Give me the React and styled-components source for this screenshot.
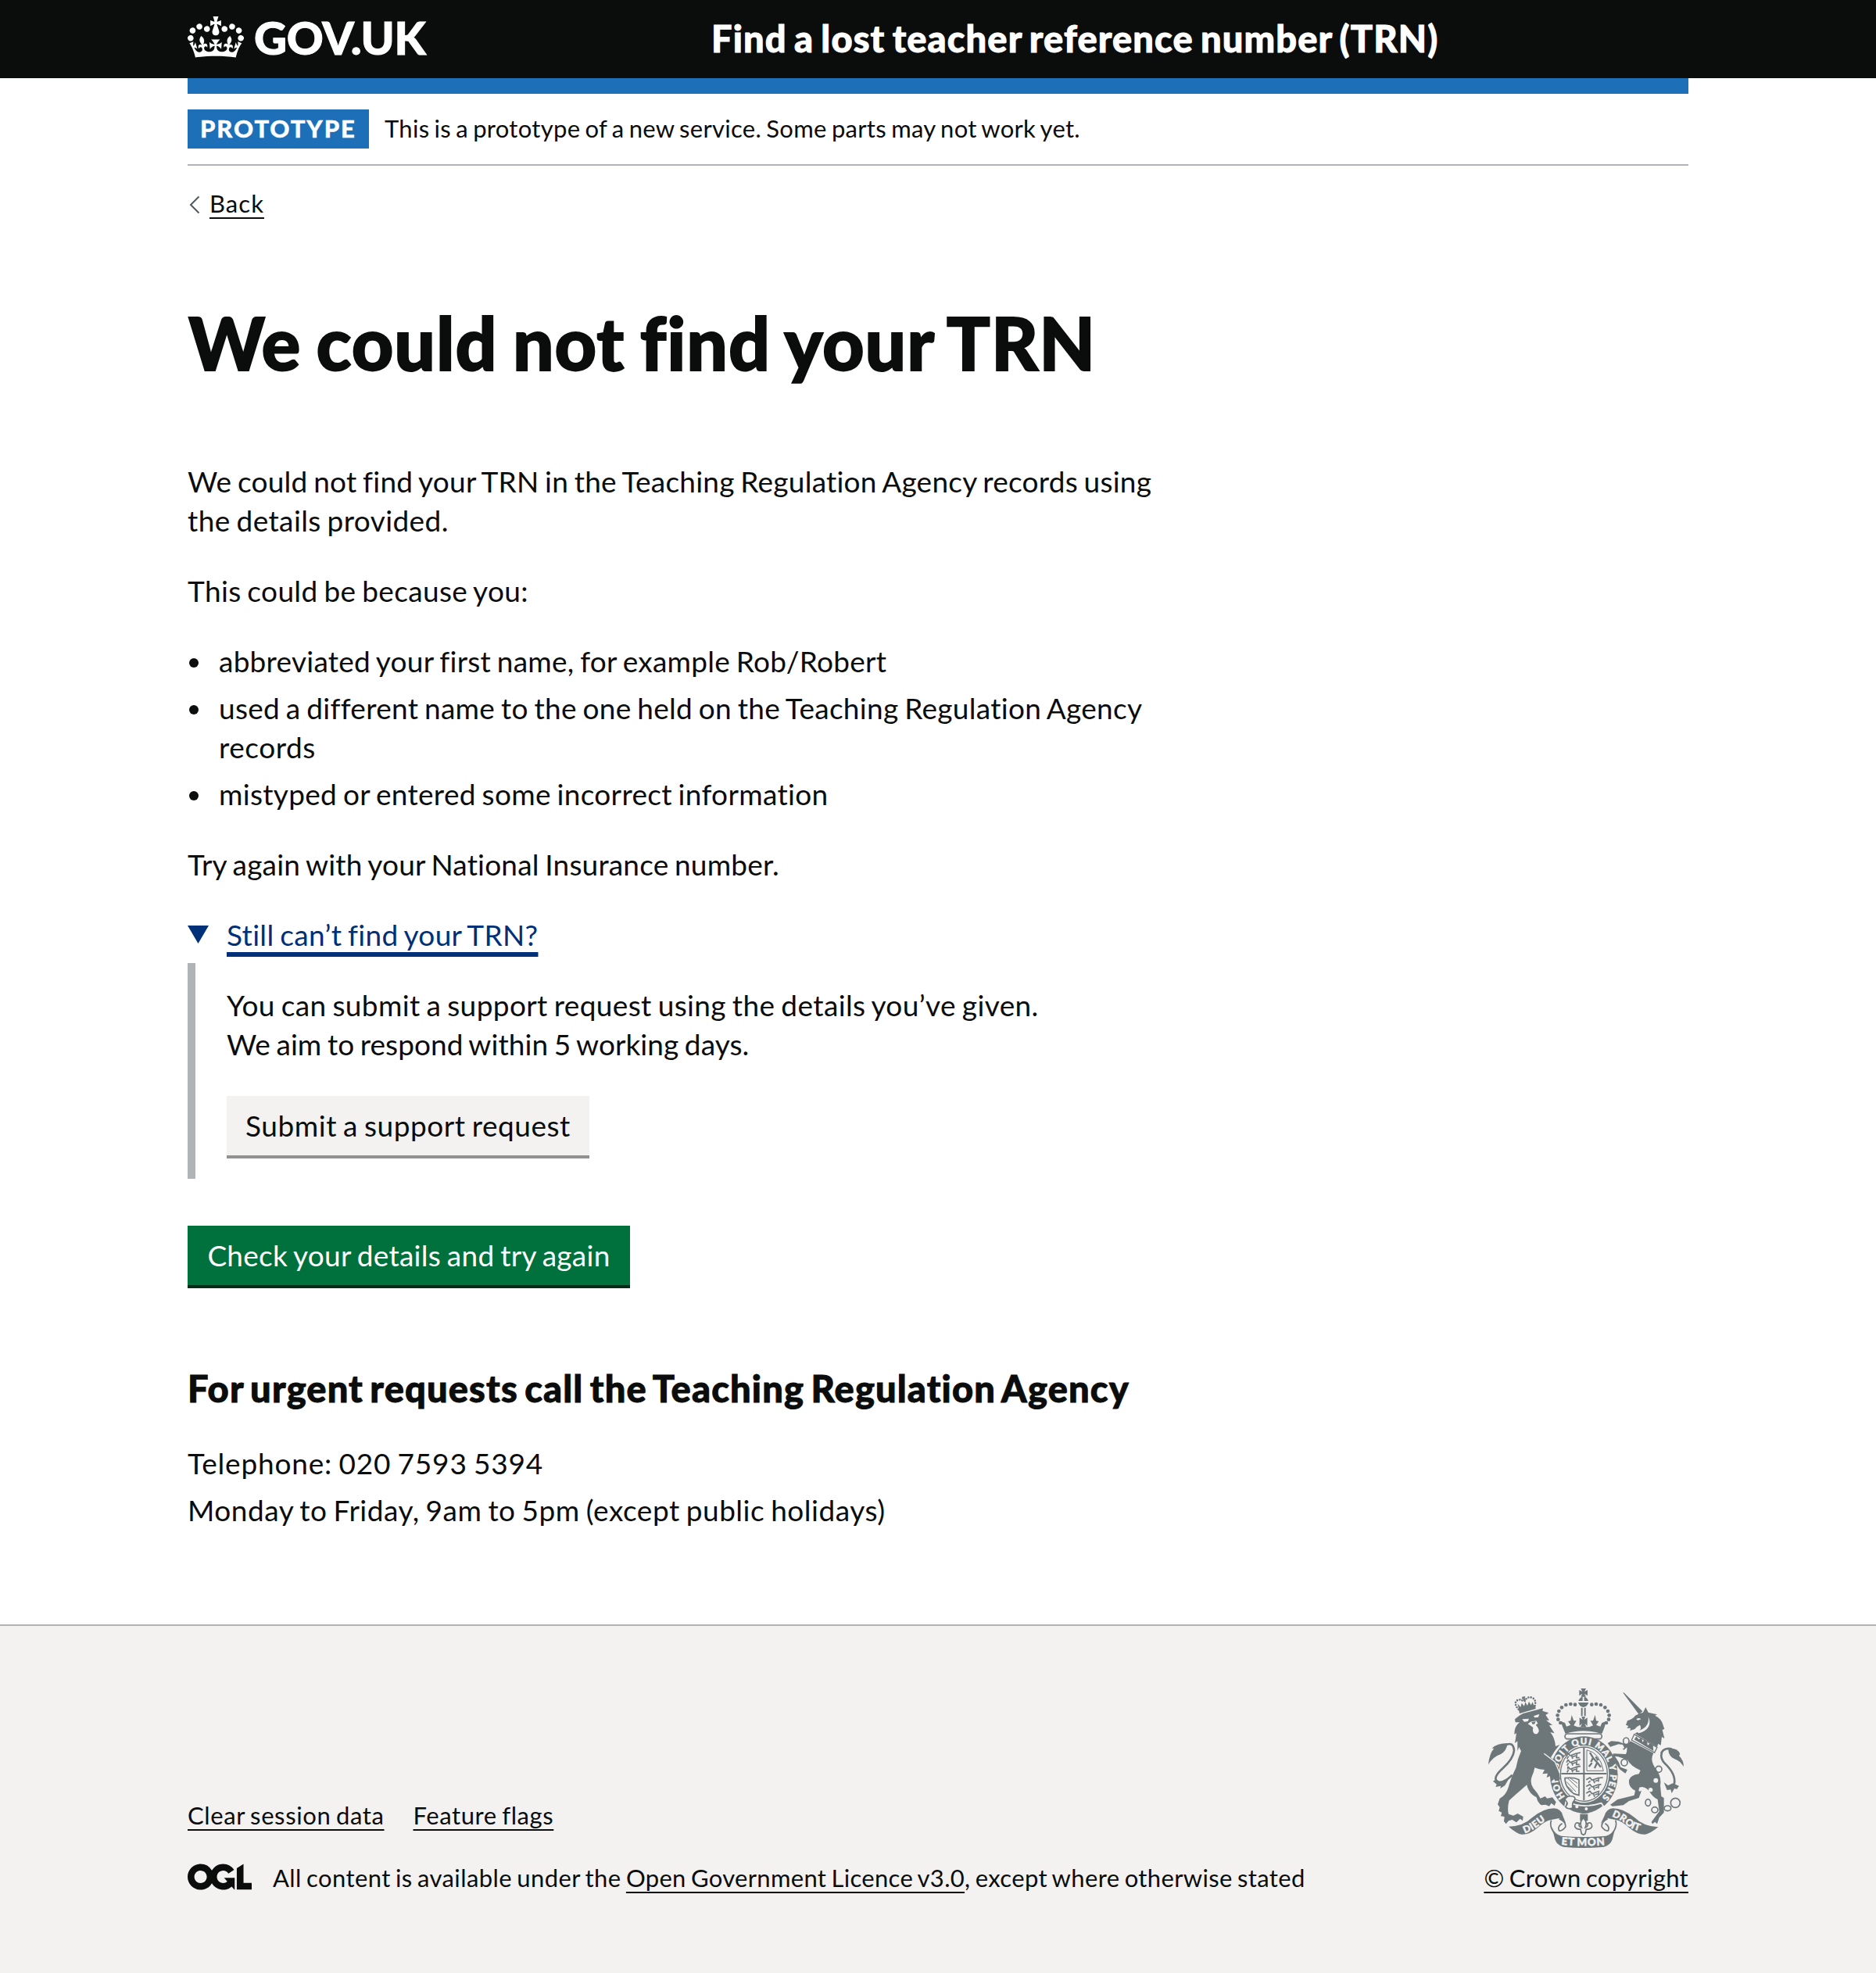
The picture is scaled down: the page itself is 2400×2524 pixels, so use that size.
import React from 'react';
import styled, { createGlobalStyle, css } from 'styled-components';

const ink = '#0b0c0c';
const crestGrey = '#6d777a';
const panel = '#f3f2f1';
const rule = '#b1b4b6';

const GlobalStyle = createGlobalStyle`
  *, *::before, *::after { box-sizing: border-box; }
  body {
    margin: 0;
    background: #fff;
    color: ${ink};
    font-family: Lato, 'Open Sans', 'Liberation Sans', sans-serif;
    font-size: 37px;
    line-height: 50px;
    word-spacing: -2px;
  }
`;

const Page = styled.div`
  min-height: 2524px;
  display: flex;
  flex-direction: column;
`;

const Container = styled.div`
  width: 1920px;
  margin: 0 auto;
`;

const Header = styled.header`
  height: 100px;
  background: ${ink};
  color: #fff;
`;

const HeaderRow = styled(Container)`
  display: flex;
  align-items: center;
  height: 100px;
`;

const HomeLink = styled.div`
  display: flex;
  align-items: center;
  width: 670px;
  font-size: 58px;
  font-weight: 900;
  line-height: 94px;
  letter-spacing: -0.2px;
  -webkit-text-stroke: 1px currentColor;
`;

const Wordmark = styled.span`
  padding-bottom: 5px;
`;

const CrownIcon = styled.svg`
  display: block;
  width: 72px;
  height: 53px;
  margin: 0 13px 5px 0;
`;

const ServiceName = styled.div`
  font-size: 47px;
  font-weight: 900;
  line-height: 60px;
  letter-spacing: 1.1px;
  word-spacing: -3px;
  -webkit-text-stroke: 0.9px currentColor;
  white-space: nowrap;
  padding-bottom: 3px;
`;

const AccentBar = styled(Container)`
  height: 20px;
  background: #1d70b8;
`;

const PhaseBanner = styled(Container)`
  display: flex;
  align-items: center;
  gap: 20px;
  height: 92px;
  border-bottom: 2px solid ${rule};
`;

const Tag = styled.strong`
  width: 232px;
  height: 50px;
  padding-left: 16px;
  background: #1d70b8;
  color: #fff;
  font-size: 31px;
  font-weight: 900;
  line-height: 48px;
  letter-spacing: 1.9px;
  -webkit-text-stroke: 0.4px currentColor;
  white-space: nowrap;
`;

const Text = styled.span`
  display: ${(p) => (p.$block ? 'block' : 'inline')};
  letter-spacing: ${(p) => p.$ls || 0}px;
  white-space: nowrap;
`;

const small = css`
  font-size: 31px;
  line-height: 40px;
`;

const BannerText = styled.div`
  ${small}
  padding-bottom: 3px;
`;

const linkLine = css`
  color: ${ink};
  text-decoration: underline;
  text-decoration-thickness: 2px;
  text-underline-offset: 6px;
  text-decoration-skip-ink: none;
`;

const SmallLink = styled.a`
  ${linkLine}
  letter-spacing: ${(p) => p.$ls || 0}px;
  white-space: nowrap;
`;

const BackRow = styled.div`
  ${small}
  display: flex;
  align-items: center;
  margin-top: 28px;
`;

const BackArrow = styled.svg`
  width: 28px;
  height: 24px;
  margin-top: 3px;
`;

const Title = styled.h1`
  margin: 108px 0 103px;
  padding-left: 1px;
  font-size: 93px;
  font-weight: 900;
  line-height: 100px;
  letter-spacing: 0.9px;
  word-spacing: -3.5px;
  -webkit-text-stroke: 1.8px currentColor;
`;

const Paragraph = styled.p`
  margin: 0 0 ${(p) => p.$gap || 40}px;
`;

const BulletList = styled.ul`
  display: flex;
  flex-direction: column;
  gap: 10px;
  margin: 0 0 40px;
  padding: 0;
  list-style: none;
`;

const Bullet = styled.li`
  display: flex;
  gap: 26px;

  &::before {
    content: '';
    flex: none;
    width: 12px;
    height: 12px;
    margin: 21px 0 0 2px;
    border-radius: 50%;
    background: ${ink};
  }
`;

const Summary = styled.div`
  display: flex;
  gap: 23px;
  height: 61px;
  color: #003078;
`;

const Triangle = styled.span`
  width: 27px;
  height: 23px;
  margin-top: 13px;
  background: #003078;
  clip-path: polygon(0 0, 100% 0, 50% 100%);
`;

const SummaryText = styled.span`
  letter-spacing: 0.33px;
  text-decoration: underline;
  text-decoration-thickness: 6px;
  text-underline-offset: 8px;
  text-decoration-skip-ink: none;
`;

const Inset = styled.div`
  height: 276px;
  margin-bottom: 60px;
  padding: 29px 0 0 40px;
  border-left: 10px solid ${rule};
`;

const Button = styled.button`
  display: block;
  height: 80px;
  margin: 0;
  padding: 0 24px;
  border: 0;
  border-bottom: 4px solid ${(p) => (p.$secondary ? '#929191' : '#002d18')};
  background: ${(p) => (p.$secondary ? panel : '#00703c')};
  color: ${(p) => (p.$secondary ? ink : '#fff')};
  width: ${(p) => p.$width}px;
  font: inherit;
  letter-spacing: ${(p) => p.$ls}px;
  word-spacing: inherit;
  white-space: nowrap;
`;

const Subheading = styled.h2`
  margin: 98px 0 41px;
  font-size: 47px;
  font-weight: 900;
  line-height: 60px;
  letter-spacing: 1.15px;
  word-spacing: -4px;
  -webkit-text-stroke: 0.9px currentColor;
`;

const Contact = styled.div`
  display: flex;
  flex-direction: column;
  gap: 10px;
`;

const Footer = styled.footer`
  ${small}
  height: 446px;
  margin-top: 121px;
  border-top: 2px solid ${rule};
  background: ${panel};
`;

const FooterRow = styled(Container)`
  display: flex;
  justify-content: space-between;
  padding-top: 80px;
`;

const FooterMeta = styled.div`
  display: flex;
  flex-direction: column;
  justify-content: flex-end;
  gap: 40px;
`;

const FooterLinks = styled.div`
  display: flex;
  gap: 37px;
`;

const Licence = styled.div`
  display: flex;
  gap: 27px;
`;

const OglLogo = styled.svg`
  width: 82px;
  height: 34px;
  margin-top: 2px;
`;

const Copyright = styled.div`
  display: flex;
  flex-direction: column;
  align-items: flex-end;
  gap: 18px;
`;

const CrestArt = styled.svg`
  display: block;
  width: 250px;
  height: 204px;
  margin-right: 6px;
`;

const Crown = () => (
  <CrownIcon viewBox="0 0 132 97" fill="#fff">
    <path fillRule="evenodd" d="M25 30.2c3.5 1.5 7.7-.2 9.1-3.7 1.5-3.6-.2-7.8-3.9-9.2-3.6-1.4-7.6.3-9.1 3.9-1.4 3.5.3 7.5 3.9 9zM9 39.5c3.6 1.5 7.8-.2 9.2-3.7 1.5-3.6-.2-7.8-3.9-9.1-3.6-1.5-7.6.2-9.1 3.8-1.4 3.5.3 7.5 3.8 9zM4.4 57.2c3.5 1.5 7.7-.2 9.1-3.8 1.5-3.6-.2-7.7-3.9-9.1-3.5-1.5-7.6.3-9.1 3.8-1.4 3.5.3 7.6 3.9 9.1zm38.3-21.4c3.5 1.5 7.7-.2 9.1-3.8 1.5-3.6-.2-7.7-3.9-9.1-3.6-1.5-7.6.3-9.1 3.8-1.3 3.6.4 7.7 3.9 9.1zm64.4-5.6c-3.6 1.5-7.8-.2-9.1-3.7-1.5-3.6.2-7.8 3.8-9.2 3.6-1.4 7.7.3 9.2 3.9 1.3 3.5-.4 7.5-3.9 9zm15.9 9.3c-3.6 1.5-7.7-.2-9.1-3.7-1.5-3.6.2-7.8 3.7-9.1 3.6-1.5 7.7.2 9.2 3.8 1.5 3.5-.3 7.5-3.8 9zm4.7 17.7c-3.6 1.5-7.8-.2-9.2-3.8-1.5-3.6.2-7.7 3.9-9.1 3.6-1.5 7.7.3 9.2 3.8 1.3 3.5-.4 7.6-3.9 9.1zM89.3 35.8c-3.6 1.5-7.8-.2-9.2-3.8-1.4-3.6.2-7.7 3.9-9.1 3.6-1.5 7.7.3 9.2 3.8 1.4 3.6-.3 7.7-3.9 9.1zM69.7 17.7l8.9 4.7V9.3l-8.9 2.8c-.2-.3-.5-.6-.9-.9L72.4 0H59.6l3.5 11.2c-.3.3-.6.5-.9.9l-8.8-2.8v13.1l8.8-4.7c.3.3.6.7.9.9l-5 15.4v.1c-.2.8-.4 1.6-.4 2.4 0 4.1 3.1 7.5 7 8.1h.2c.3 0 .7.1 1 .1.4 0 .7 0 1-.1h.2c4-.6 7.1-4.1 7.1-8.1 0-.8-.1-1.7-.4-2.4V34l-5.1-15.4c.4-.2.7-.6 1-.9zM66 92.8c16.9 0 32.8 1.1 47.1 3.2 4-16.9 8.9-26.7 14-33.5l-9.6-3.4c1 4.9 1.1 7.2 0 10.2-1.5-1.4-3-4.3-4.2-8.7L108.6 76c2.8-2 5-3.2 7.5-3.3-4.4 9.4-10 11.9-13.6 11.2-4.3-.8-6.3-4.6-5.6-7.9 1-4.7 5.7-5.9 8-.5 4.3-8.7-3-11.4-7.6-8.8 7.1-7.2 7.9-13.5 2.1-21.1-8 6.1-8.1 12.3-4.5 20.8-4.7-5.4-12.1-2.5-9.5 6.2 3.4-5.2 7.9-2 7.2 3.1-.6 4.3-6.4 7.8-13.5 7.2-10.3-.9-10.9-8-11.2-13.8 2.5-.5 7.1 1.8 11 7.3L80.2 60c-4.1 4.4-8 5.3-12.3 5.4 1.4-4.4 8-11.6 8-11.6H55.5s6.4 7.2 7.9 11.6c-4.2-.1-8-1-12.3-5.4l1.4 16.4c3.9-5.5 8.5-7.7 10.9-7.3-.3 5.8-.9 12.8-11.1 13.8-7.2.6-12.9-2.9-13.5-7.2-.7-5 3.8-8.3 7.1-3.1 2.7-8.7-4.6-11.6-9.4-6.2 3.7-8.5 3.6-14.7-4.6-20.8-5.8 7.6-5 13.9 2.2 21.1-4.7-2.6-11.9.1-7.7 8.8 2.3-5.5 7.1-4.2 8.1.5.7 3.3-1.3 7.1-5.7 7.9-3.5.7-9-1.8-13.5-11.2 2.5.1 4.7 1.3 7.5 3.3l-4.7-15.4c-1.2 4.4-2.7 7.2-4.3 8.7-1.1-3-.9-5.3 0-10.2l-9.5 3.4c5 6.9 9.9 16.7 14 33.5 14.8-2.1 30.8-3.2 47.7-3.2z" />
  </CrownIcon>
);

const crownBeads = [
  [405, 122], [388, 120], [370, 123], [354, 133], [343, 147], [338, 163], [340, 179], [349, 192],
];

const Crest = () => (
  <CrestArt viewBox="72 60 750 612" fill={crestGrey}>
    {/* lion */}
    <path d="M174 178L190 165L205 156L282 136L280 146L304 154L292 162L306 182L294 182L318 200L306 202L326 232L310 228Q328 250 330 282L346 276Q325 300 312 325Q340 350 346 385L348 408L338 404L334 414L326 402L316 412L310 396L296 402L300 386L280 388L288 372L268 370L250 364Q247 382 240 396Q230 420 244 442Q262 462 272 482L290 474L298 482L318 478L332 496L326 510L314 500L306 512L292 506L276 508Q262 500 257 478Q226 462 220 430Q182 462 152 490Q144 520 150 542L168 548L185 540L206 552L204 568L194 560L180 574L164 564L150 568L140 580L132 570L134 552L120 550L124 536L112 530L116 516L108 505L116 482Q142 470 152 430Q160 400 178 365Q184 330 198 300L190 285L184 300L184 262L174 270L180 232L172 236Q172 205 192 190L176 190Z" />
    <path d="M202 178L228 176L224 186L210 188ZM246 166L268 158L264 170L250 172Z" fill={panel} />
    <path d="M224 196L234 188L256 184L262 194L254 200Q268 214 266 226Q260 238 250 234Q240 228 244 210L236 204Z" fill={panel} />
    <path d="M238 190L254 186L250 196L242 198Z" />
    <path d="M72 352Q76 310 94 290L86 290Q104 270 146 270Q142 300 120 312Q90 322 72 352Z" />
    <path d="M134 280Q168 260 171 298Q168 330 128 366Q90 400 104 416Q124 430 164 392" fill="none" stroke={crestGrey} strokeWidth="8" />
    <path d="M90 416L104 408L120 424L150 408L136 432L118 444L120 434L100 438L104 428Z" />
    {/* lion's crown */}
    <path d="M188 140L252 124L254 138L192 156ZM184 118L196 132L200 116L210 128L214 112L222 126L228 110L236 124L242 112L248 128L190 142ZM202 92L214 90L212 98L216 106L206 108L206 100L200 100Z" />
    <g fill="none" stroke={crestGrey} strokeWidth="8" strokeLinecap="round" strokeDasharray="0 10">
      <path d="M188 140Q168 118 182 106Q198 98 208 112" />
      <path d="M212 108Q222 88 242 96Q258 106 250 128" />
    </g>

    {/* St Edward's crown */}
    {crownBeads.map(([x, y]) => (
      <React.Fragment key={x}>
        <circle cx={x} cy={y} r="7" />
        <circle cx={874 - x} cy={y} r="7" />
      </React.Fragment>
    ))}
    <path d="M427 60H447L441 72L453 66V88L441 80L447 92H427L433 80L421 88V66L433 72Z" />
    <path d="M418 108Q422 94 434 92V108ZM440 92Q452 94 456 108H440ZM417 114H457Q452 130 437 132Q422 130 417 114Z" />
    <path d="M428 134H434V166H428ZM440 134H446V166H440Z" />
    <path d="M422 172L434 180L430 168H444L440 180L452 172V204L442 194L448 208H426L432 194L422 204Z" />
    <path d="M350 186Q356 206 368 234Q437 212 508 234Q520 206 524 186L508 192L502 206L486 200L496 186L486 184L482 162L474 184L464 184L474 202L460 208H414L400 202L410 184L400 184L392 162L388 184L378 186L388 200L372 206L366 192Z" />
    <rect x="366" y="234" width="142" height="20" rx="10" fill={panel} stroke={crestGrey} strokeWidth="5" />

    {/* garter */}
    <ellipse cx="439" cy="392" rx="130" ry="148" />
    <ellipse cx="439" cy="389" rx="96" ry="110" fill={panel} />
    <ellipse cx="439" cy="389" rx="90" ry="104" fill="none" stroke={crestGrey} strokeWidth="4" />
    <path d="M436 285H442V490H436ZM352 384H526V390H352Z" />
    <defs>
      <path id="garterLine" d="M371 480A101 118 0 1 1 503 484" />
      <path id="leftScroll" d="M212 616Q250 602 276 578Q296 562 330 550" />
      <path id="rightScroll" d="M546 551Q580 562 608 588Q640 610 690 612" />
      <path id="midScroll" d="M352 659Q437 669 540 659" />
    </defs>
    <g fill={panel} stroke={panel} strokeWidth="1.4" fontFamily="Lato, sans-serif" fontWeight="900" wordSpacing="0">
      <text fontSize="34" letterSpacing="3.4"><textPath href="#garterLine" startOffset="6">HONI SOIT QUI MAL Y PENSE</textPath></text>
    </g>
    <g fill="none" stroke={crestGrey} strokeWidth="5" strokeLinejoin="round">
      {[0, 26, 52].map((dy) => (
        <path key={dy} d={`M${368 + dy / 6} ${318 + dy}L378 ${308 + dy}L386 ${318 + dy}L408 ${310 + dy}L426 ${306 + dy}M380 ${320 + dy}L374 ${330 + dy}M392 ${318 + dy}L396 ${330 + dy}M412 ${312 + dy}L410 ${326 + dy}L422 ${326 + dy}M396 ${322 + dy}L408 ${318 + dy}`} />
      ))}
      {[0, 26, 52].map((dy) => (
        <path key={dy} d={`M448 ${410 + dy}L462 ${402 + dy}L470 ${412 + dy}L492 ${404 + dy}L${512 - dy / 4} ${402 + dy}M464 ${414 + dy}L456 ${422 + dy}M476 ${412 + dy}L480 ${424 + dy}M496 ${406 + dy}L494 ${418 + dy}M482 ${416 + dy}L492 ${412 + dy}`} />
      ))}
      <path d="M450 296V376H514" strokeWidth="3" />
      <path d="M450 296Q500 306 514 376" strokeWidth="3" />
      <path d="M462 306L474 326L466 342M474 326L490 344L480 366M490 344L504 362M470 346L458 360M484 322L494 336" strokeWidth="7" />
      <path d="M366 404Q366 440 400 464L420 470V410Q400 400 366 404Z" />
      <path d="M376 404L414 440M386 404L414 424M372 418L408 456M374 434L396 454" strokeWidth="3" />
    </g>
    {/* buckle and strap */}
    <path d="M370 492Q430 524 506 500L514 512Q470 546 430 542Q390 536 366 514Z" stroke={panel} strokeWidth="5" />
    <path d="M366 488Q372 470 396 474Q410 478 402 490Q392 500 396 518Q376 526 368 514Q384 500 366 488Z" fill={panel} stroke={crestGrey} strokeWidth="5" />
    <circle cx="412" cy="514" r="6" fill={panel} />
    <circle cx="448" cy="522" r="6" fill={panel} />
    <path d="M424 542H454V568H424Z" />
    <path d="M437 556Q454 574 444 594Q458 590 452 578Q470 570 470 590Q464 602 448 600L444 618L437 622L430 618L426 600Q410 602 404 590Q404 570 422 578Q416 590 430 594Q420 574 437 556Z" fill={panel} stroke={crestGrey} strokeWidth="5" />
    {/* lion's paw over the garter */}
    <path d="M284 312L318 330L340 358L348 410L336 406L330 416L322 404L312 410L308 392Z" />
    <path d="M286 310L328 342L346 384" fill="none" stroke={panel} strokeWidth="4" />

    {/* unicorn */}
    <path d="M588 75L594 77L664 148L650 160Z" />
    <path d="M600 200L606 184Q628 176 636 164Q648 156 666 152L676 132L686 152L720 160L712 164Q736 176 742 198L748 216L740 218L748 252L738 246L734 278L724 272L720 284L646 240L634 232Q666 220 654 200Q640 206 634 216L616 222L618 212L604 212L610 204Z" />
    <path d="M640 178Q650 170 658 178L646 182Z" fill={panel} />
    <path d="M686 168Q694 210 640 226L650 232Q706 214 686 168Z" fill={panel} />
    <path d="M632 236L720 286L710 306L622 258Z" fill={panel} stroke={crestGrey} strokeWidth="4" />
    <path d="M632 256L640 244L650 256L660 248L664 266L672 256L680 262L684 278L694 270L704 276L706 300Z" />
    <path d="M618 262L706 308Q690 336 716 370Q738 400 732 432L736 474L746 480V536L728 556L720 580L712 572L702 580L698 572L728 532L722 486Q704 478 688 452Q668 432 652 440Q644 462 660 452L650 480L612 492L590 508L548 512L540 506L568 486L632 470L636 452Q610 440 612 412Q618 392 650 388L656 374Q620 360 606 334L570 322L558 320L572 342L580 362L606 372L598 386L576 370L560 346L546 322L552 310L600 312Q606 300 604 286L592 296L582 288L590 276L572 274L540 284L530 270L544 262L572 264L604 276Z" />
    <path d="M738 304Q730 330 752 350Q792 390 786 424L784 436" fill="none" stroke={crestGrey} strokeWidth="8" />
    <path d="M736 308Q746 286 776 292" fill="none" stroke={crestGrey} strokeWidth="8" />
    <path d="M762 290Q800 288 808 312L804 318Q822 336 822 360Q806 336 786 330Q764 322 762 290Z" />
    <path d="M746 420L762 432L780 424L804 434L796 446L786 444L776 462L772 448L758 450Z" />
    <g fill={panel}>
      <circle cx="715" cy="413" r="9" />
      <circle cx="695" cy="449" r="8" />
      <circle cx="586" cy="286" r="7" />
    </g>
    <g fill="none" stroke={crestGrey} strokeWidth="5">
      <ellipse cx="601" cy="262" rx="11" ry="13" />
      <ellipse cx="594" cy="344" rx="12" ry="13" />
      <circle cx="726" cy="370" r="12" />
      <ellipse cx="685" cy="498" rx="10" ry="13" />
      <ellipse cx="711" cy="526" rx="12" ry="11" />
      <ellipse cx="760" cy="520" rx="13" ry="10" />
      <circle cx="790" cy="499" r="18" />
    </g>

    {/* motto scroll */}
    <path d="M150 590Q205 590 240 556Q284 520 324 520Q352 522 358 548L370 578L344 558L314 564Q290 568 262 594Q230 622 200 620Q182 618 150 590Z" />
    <path d="M724 592Q668 590 634 556Q590 520 550 520Q526 522 518 548L504 578L530 558L560 564Q584 568 612 594Q644 622 674 620Q692 618 724 592Z" />
    <path d="M314 566Q304 590 330 622M344 560Q372 572 368 592Q356 608 344 606Q336 590 356 578M560 566Q570 590 544 622M530 560Q504 572 508 592Q520 608 532 606Q540 590 520 578" fill="none" stroke={crestGrey} strokeWidth="5" />
    <path d="M316 592Q328 622 352 626Q437 634 524 626Q546 622 560 592L548 640Q540 662 516 668Q437 676 360 668Q336 662 328 640Z" />
    <g fill={panel} stroke={panel} strokeWidth="1.4" fontFamily="Lato, sans-serif" fontWeight="900">
      <text fontSize="37" letterSpacing="2"><textPath href="#leftScroll">DIEU</textPath></text>
      <text fontSize="37" letterSpacing="1"><textPath href="#rightScroll">DROIT</textPath></text>
      <text fontSize="40" letterSpacing="2.5"><textPath href="#midScroll">ET MON</textPath></text>
    </g>
  </CrestArt>
);

export default function App() {
  return (
    <Page>
      <GlobalStyle />
      <Header>
        <HeaderRow>
          <HomeLink>
            <Crown />
            <Wordmark>GOV.UK</Wordmark>
          </HomeLink>
          <ServiceName>Find a lost teacher reference number (TRN)</ServiceName>
        </HeaderRow>
      </Header>
      <AccentBar />
      <PhaseBanner>
        <Tag>PROTOTYPE</Tag>
        <BannerText>
          <Text $ls={0.29}>This is a prototype of a new service. Some parts may not work yet.</Text>
        </BannerText>
      </PhaseBanner>

      <Container as="main">
        <BackRow>
          <BackArrow viewBox="0 0 28 24" fill="none" stroke="#505a5f" strokeWidth="2">
            <path d="M14.5 1.500L4 12l10.500 10.500" />
          </BackArrow>
          <SmallLink $ls={1.05}>Back</SmallLink>
        </BackRow>

        <Title>We could not find your TRN</Title>

        <Paragraph>
          <Text $block $ls={0.23}>We could not find your TRN in the Teaching Regulation Agency records using</Text>
          <Text $block $ls={0.4}>the details provided.</Text>
        </Paragraph>
        <Paragraph>
          <Text $ls={0.36}>This could be because you:</Text>
        </Paragraph>
        <BulletList>
          <Bullet>
            <Text $ls={0.25}>abbreviated your first name, for example Rob/Robert</Text>
          </Bullet>
          <Bullet>
            <div>
              <Text $block $ls={0.29}>used a different name to the one held on the Teaching Regulation Agency</Text>
              <Text $block $ls={0.55}>records</Text>
            </div>
          </Bullet>
          <Bullet>
            <Text $ls={0.31}>mistyped or entered some incorrect information</Text>
          </Bullet>
        </BulletList>
        <Paragraph>
          <Text $ls={0.18}>Try again with your National Insurance number.</Text>
        </Paragraph>

        <Summary>
          <Triangle />
          <SummaryText>Still can’t find your TRN?</SummaryText>
        </Summary>
        <Inset>
          <Paragraph $gap={41}>
            <Text $block $ls={0.39}>You can submit a support request using the details you’ve given.</Text>
            <Text $block $ls={0.07}>We aim to respond within 5 working days.</Text>
          </Paragraph>
          <Button $secondary $width={464} $ls={0.55}>Submit a support request</Button>
        </Inset>
        <Button $width={566} $ls={0.28}>Check your details and try again</Button>

        <Subheading>For urgent requests call the Teaching Regulation Agency</Subheading>
        <Contact>
          <Text $ls={0.82}>Telephone: 020 7593 5394</Text>
          <Text $ls={0.52}>Monday to Friday, 9am to 5pm (except public holidays)</Text>
        </Contact>
      </Container>

      <Footer>
        <FooterRow>
          <FooterMeta>
            <FooterLinks>
              <SmallLink $ls={0.62}>Clear session data</SmallLink>
              <SmallLink $ls={0.58}>Feature flags</SmallLink>
            </FooterLinks>
            <Licence>
              <OglLogo viewBox="0 0 483.2 195.7" fill={ink}>
                <path d="M421.5 142.8V.1l-50.7 32.3v161.1h112.4v-50.7zm-122.3-9.6A47.12 47.12 0 0 1 221 97.8c0-26 21.1-47.1 47.1-47.1 16.7 0 31.4 8.7 39.7 21.8l42.7-27.2A97.63 97.63 0 0 0 268.1 0c-36.5 0-68.3 20.1-85.1 49.700A98 98 0 0 0 97.8 0C43.9 0 0 43.9 0 97.8s43.9 97.8 97.8 97.8c36.5 0 68.3-20.1 85.1-49.700a97.76 97.76 0 0 0 149.600 25.4l19.4 22.2h3v-87.8h-80l24.3 27.5zM97.8 145c-26 0-47.1-21.1-47.1-47.1s21.1-47.1 47.1-47.1 47.1 21.1 47.1 47.1S123.8 145 97.8 145" />
              </OglLogo>
              <div>
                <Text $ls={0.4}>All content is available under the </Text>
                <SmallLink $ls={0.31}>Open Government Licence v3.0</SmallLink>
                <Text $ls={0.35}>, except where otherwise stated</Text>
              </div>
            </Licence>
          </FooterMeta>
          <Copyright>
            <Crest />
            <SmallLink $ls={0.33}>© Crown copyright</SmallLink>
          </Copyright>
        </FooterRow>
      </Footer>
    </Page>
  );
}
